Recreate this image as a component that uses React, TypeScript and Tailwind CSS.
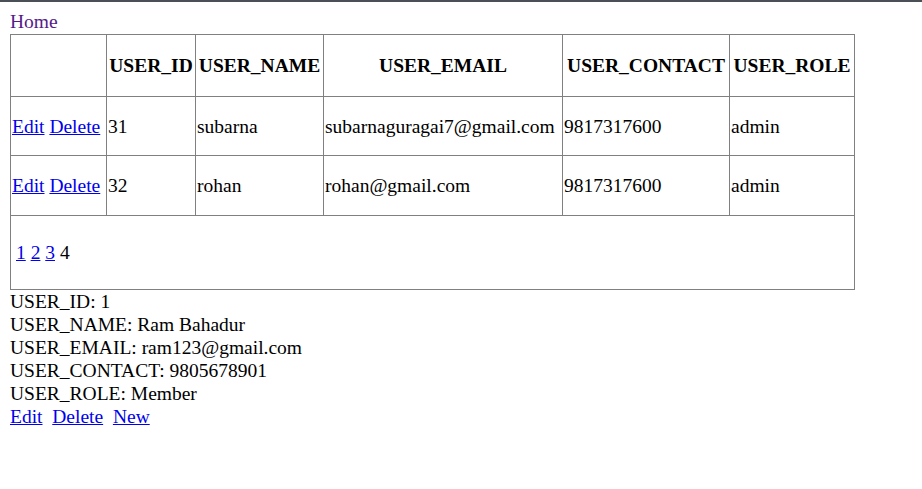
const users = [
  { id: 31, name: "subarna", email: "subarnaguragai7@gmail.com", contact: "9817317600", role: "admin" },
  { id: 32, name: "rohan", email: "rohan@gmail.com", contact: "9817317600", role: "admin" },
];

const headers = ["USER_ID", "USER_NAME", "USER_EMAIL", "USER_CONTACT", "USER_ROLE"];

const cell = "border border-[#808080] px-[1px] align-middle";

export default function App() {
  return (
    <div className="min-h-[489px] border-t-2 border-[#4b5057] bg-white pl-[10px] pt-[8px] font-['Liberation_Serif',serif] text-[19.5px] leading-[23px] text-black">
      <a href="#" className="text-[#551a8b]">
        Home
      </a>
      <table className="mt-[1px] w-[845px] table-fixed border-collapse">
        <colgroup>
          <col className="w-[96px]" />
          <col className="w-[89px]" />
          <col className="w-[128px]" />
          <col className="w-[239px]" />
          <col className="w-[167px]" />
          <col className="w-[125px]" />
        </colgroup>
        <thead>
          <tr className="h-[62px]">
            <th className={cell}></th>
            {headers.map((h) => (
              <th key={h} className={`${cell} whitespace-nowrap text-center font-bold`}>
                {h}
              </th>
            ))}
          </tr>
        </thead>
        <tbody>
          {users.map((u, i) => (
            <tr key={u.id} className={i === 0 ? "h-[59px]" : "h-[60px]"}>
              <td className={`${cell} whitespace-nowrap`}>
                <a href="#" className="text-[#0000ee] underline">Edit</a>{" "}
                <a href="#" className="text-[#0000ee] underline">Delete</a>
              </td>
              <td className={cell}>{u.id}</td>
              <td className={cell}>{u.name}</td>
              <td className={`${cell} whitespace-nowrap`}>{u.email}</td>
              <td className={cell}>{u.contact}</td>
              <td className={cell}>{u.role}</td>
            </tr>
          ))}
          <tr className="h-[74px]">
            <td colSpan={6} className={`${cell} pl-[5px]`}>
              <a href="#" className="text-[#0000ee] underline">1</a>{" "}
              <a href="#" className="text-[#0000ee] underline">2</a>{" "}
              <a href="#" className="text-[#0000ee] underline">3</a> 4
            </td>
          </tr>
        </tbody>
      </table>
      <div>USER_ID: 1</div>
      <div>USER_NAME: Ram Bahadur</div>
      <div>USER_EMAIL: ram123@gmail.com</div>
      <div>USER_CONTACT: 9805678901</div>
      <div>USER_ROLE: Member</div>
      <div>
        <a href="#" className="text-[#0000ee] underline">Edit</a>
        {"\u00a0 "}
        <a href="#" className="text-[#0000ee] underline">Delete</a>
        {"\u00a0 "}
        <a href="#" className="text-[#0000ee] underline">New</a>
      </div>
    </div>
  );
}
